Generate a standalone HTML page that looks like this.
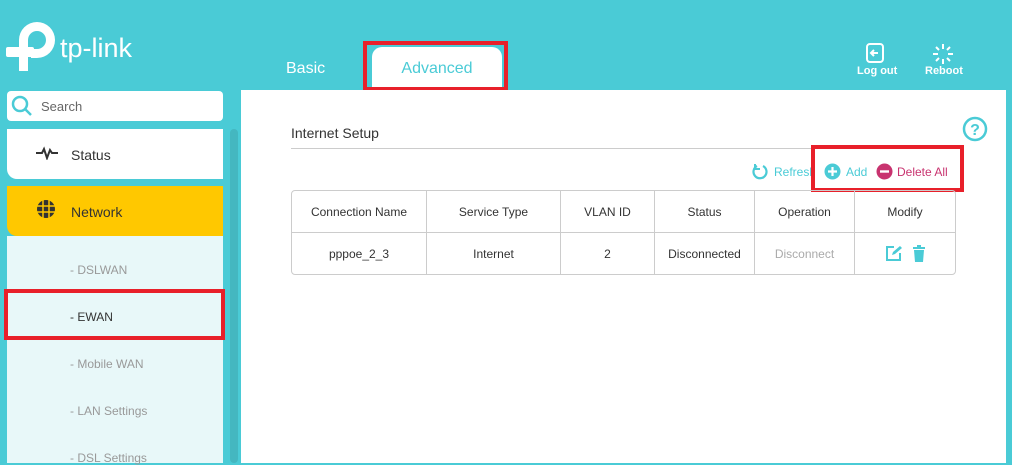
<!DOCTYPE html>
<html><head><meta charset="utf-8"><style>
*{margin:0;padding:0;box-sizing:border-box}
body{width:1012px;height:463px;overflow:hidden;background:#4acbd6;font-family:"Liberation Sans",sans-serif;position:relative}
.abs{position:absolute}
.redbox{position:absolute;border:4px solid #e8202a}
table{border-collapse:separate;border-spacing:0}
</style></head><body>
<!-- logo -->
<svg class="abs" style="left:0px;top:18px" width="60" height="56" viewBox="0 0 60 56">
<path fill-rule="evenodd" fill="#fff" d="M19 22 A18 18 0 0 1 37 4 A18 18 0 0 1 55 22 A18 18 0 0 1 37 40 H31 V31 H37 A9 9 0 0 0 46 22 A9 9 0 0 0 37 13 A9 9 0 0 0 28 22 V53 H19 Z"/>
<rect x="6" y="29" width="28" height="10" rx="2" fill="#fff"/>
</svg>
<div class="abs" style="left:60px;top:33px;color:#fff;font-size:27px">tp-link</div>
<!-- tabs -->
<div class="abs" style="left:286px;top:60px;color:#fff;font-size:16px">Basic</div>
<div class="abs" style="left:372px;top:47px;width:130px;height:43px;background:#fff;border-radius:10px 10px 0 0;color:#4acbd6;font-size:16px;text-align:center;line-height:43px">Advanced</div>
<div class="redbox" style="left:363px;top:41px;width:145px;height:50px"></div>
<!-- logout / reboot -->
<svg class="abs" style="left:865px;top:43px" width="20" height="20" viewBox="0 0 20 20"><rect x="2" y="1" width="16" height="18" rx="3" fill="none" stroke="#fff" stroke-width="2"/><path d="M6 10h7M9 7l-3 3 3 3" stroke="#fff" stroke-width="2" fill="none"/></svg>
<div class="abs" style="left:857px;top:65px;color:#fff;font-size:11px;font-weight:bold">Log out</div>
<svg class="abs" style="left:932px;top:43px" width="22" height="22" viewBox="0 0 22 22" stroke="#fff" stroke-width="2"><path d="M11 1v5M11 16v5M1 11h5M16 11h5M4 4l3 3M15 15l3 3M4 18l3-3M15 7l3-3"/></svg>
<div class="abs" style="left:925px;top:65px;color:#fff;font-size:11px;font-weight:bold">Reboot</div>
<!-- sidebar -->
<div class="abs" style="left:7px;top:91px;width:216px;height:30px;background:#fff;border-radius:4px"></div>
<svg class="abs" style="left:11px;top:95px" width="22" height="22" viewBox="0 0 22 22"><circle cx="9" cy="9" r="7" fill="none" stroke="#4acbd6" stroke-width="2.5"/><path d="M14 14l6 6" stroke="#4acbd6" stroke-width="2.5"/></svg>
<div class="abs" style="left:41px;top:99px;color:#666;font-size:13px">Search</div>
<div class="abs" style="left:230px;top:129px;width:8px;height:334px;background:#44b7c0;border-radius:4px"></div>
<div class="abs" style="left:7px;top:129px;width:216px;height:50px;background:#fff;border-radius:0 0 0 10px"></div>
<svg class="abs" style="left:36px;top:146px" width="22" height="14" viewBox="0 0 22 14"><path d="M0 7h6l2-4 3 9 3-8 2 3h6" fill="none" stroke="#333" stroke-width="2"/></svg>
<div class="abs" style="left:71px;top:147px;color:#333;font-size:14px">Status</div>
<div class="abs" style="left:7px;top:186px;width:216px;height:50px;background:#ffc800;border-radius:0 0 0 10px"></div>
<svg class="abs" style="left:36px;top:199px" width="20" height="20" viewBox="0 0 20 20"><circle cx="10" cy="10" r="9" fill="#333"/><path d="M1 7h18M1 13h18M7 1v18M13 1v18" stroke="#ffc800" stroke-width="1.5"/></svg>
<div class="abs" style="left:71px;top:204px;color:#333;font-size:14px">Network</div>
<div class="abs" style="left:7px;top:236px;width:216px;height:227px;background:#e8f8f9"></div>
<div class="abs" style="left:70px;top:263px;color:#999;font-size:12px">- DSLWAN</div>
<div class="abs" style="left:70px;top:310px;color:#333;font-size:12px">- EWAN</div>
<div class="abs" style="left:70px;top:357px;color:#999;font-size:12px">- Mobile WAN</div>
<div class="abs" style="left:70px;top:404px;color:#999;font-size:12px">- LAN Settings</div>
<div class="abs" style="left:70px;top:451px;color:#999;font-size:12px">- DSL Settings</div>
<div class="redbox" style="left:4px;top:289px;width:221px;height:51px"></div>
<!-- main panel -->
<div class="abs" style="left:241px;top:90px;width:765px;height:373px;background:#fff"></div>
<div class="abs" style="left:291px;top:125px;color:#333;font-size:14px">Internet Setup</div>
<div class="abs" style="left:291px;top:148px;width:665px;height:1px;background:#ccc"></div>
<svg class="abs" style="left:962px;top:116px" width="26" height="26" viewBox="0 0 26 26"><circle cx="13" cy="13" r="11" fill="none" stroke="#4acbd6" stroke-width="2.5"/><text x="13" y="19" text-anchor="middle" font-size="16" font-weight="bold" fill="#4acbd6" font-family="Liberation Sans">?</text></svg>
<svg class="abs" style="left:752px;top:163px" width="16" height="17" viewBox="0 0 16 17"><path d="M5 3 A6.5 6.5 0 1 0 11 3" fill="none" stroke="#4acbd6" stroke-width="2.2"/><path d="M3 1v5h5" fill="none" stroke="#4acbd6" stroke-width="2"/></svg>
<div class="abs" style="left:774px;top:165px;color:#4acbd6;font-size:12px;width:38px;overflow:hidden;white-space:nowrap">Refresh</div>
<svg class="abs" style="left:824px;top:163px" width="17" height="17" viewBox="0 0 17 17"><circle cx="8.5" cy="8.5" r="8" fill="#4acbd6"/><path d="M8.5 4v9M4 8.5h9" stroke="#fff" stroke-width="2.2"/></svg>
<div class="abs" style="left:846px;top:165px;color:#4acbd6;font-size:12px">Add</div>
<svg class="abs" style="left:876px;top:163px" width="17" height="17" viewBox="0 0 17 17"><circle cx="8.5" cy="8.5" r="8" fill="#c8336f"/><path d="M4 8.5h9" stroke="#fff" stroke-width="2.4"/></svg>
<div class="abs" style="left:897px;top:165px;color:#c8336f;font-size:12px">Delete All</div>
<div class="redbox" style="left:811px;top:145px;width:153px;height:47px"></div>
<table class="abs" style="left:291px;top:190px;width:665px;font-size:12px;color:#333;border:1px solid #ccc;border-radius:4px">
<tr style="height:42px"><td style="width:135px;text-align:center;border-right:1px solid #ccc;border-bottom:1px solid #ccc">Connection Name</td><td style="width:134px;text-align:center;border-right:1px solid #ccc;border-bottom:1px solid #ccc">Service Type</td><td style="width:94px;text-align:center;border-right:1px solid #ccc;border-bottom:1px solid #ccc">VLAN ID</td><td style="width:100px;text-align:center;border-right:1px solid #ccc;border-bottom:1px solid #ccc">Status</td><td style="width:100px;text-align:center;border-right:1px solid #ccc;border-bottom:1px solid #ccc">Operation</td><td style="text-align:center;border-bottom:1px solid #ccc">Modify</td></tr>
<tr style="height:41px"><td style="text-align:center;border-right:1px solid #ccc">pppoe_2_3</td><td style="text-align:center;border-right:1px solid #ccc">Internet</td><td style="text-align:center;border-right:1px solid #ccc">2</td><td style="text-align:center;border-right:1px solid #ccc">Disconnected</td><td style="text-align:center;border-right:1px solid #ccc;color:#aaa">Disconnect</td><td style="text-align:center"><svg width="17" height="17" viewBox="0 0 17 17" style="vertical-align:middle"><path d="M9 2H2v13h13V8" fill="none" stroke="#4acbd6" stroke-width="2"/><path d="M7 10l1-3 7-6 2 2-7 6z" fill="#4acbd6"/></svg><svg width="14" height="17" viewBox="0 0 14 17" style="vertical-align:middle;margin-left:10px"><path d="M1 3h12M5 1h4" stroke="#4acbd6" stroke-width="2"/><path d="M2 5h10l-1 12H3z" fill="#4acbd6"/></svg></td></tr>
</table>
</body></html>
